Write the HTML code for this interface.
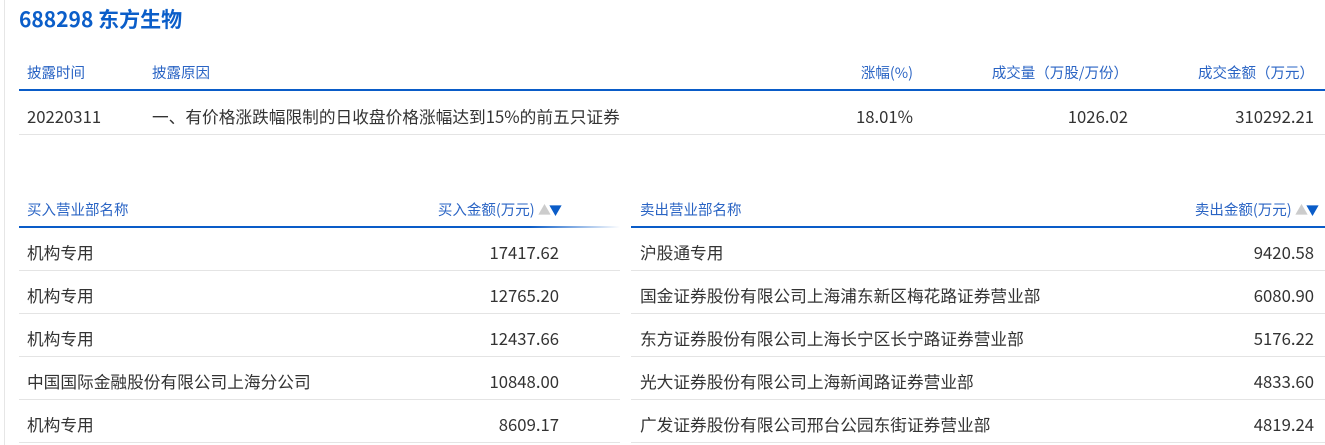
<!DOCTYPE html><html><head><meta charset="utf-8"><style>
body{margin:0;width:1325px;height:445px;overflow:hidden;background:#fff;font-family:"Noto Sans CJK SC","Liberation Sans",sans-serif;font-size:16.7px;color:#333;position:relative}
.bl{position:absolute;left:4px;top:0;width:1px;height:445px;background:#e6e6e6}
.t{position:absolute;left:19px;top:3px;font-size:21px;font-weight:bold;color:#0b5ec9;line-height:32px}
.a{position:absolute;white-space:nowrap;line-height:20px}
.h{color:#2a64c4;font-size:14.5px}
.line{position:absolute;height:2px;background:#0a5cc8}
.sep{position:absolute;height:1px;background:#e4e4e4}
.r{text-align:right}
.tri{font-size:13px;color:#ccc;letter-spacing:-2px}.tri b{color:#0a5cc8;font-weight:normal}
</style></head><body>
<div class="bl"></div>
<div class="t">688298 东方生物</div>
<div class="a h" style="left:27px;top:63px">披露时间</div>
<div class="a h" style="left:152px;top:63px">披露原因</div>
<div class="a h r" style="right:412px;top:63px">涨幅(%)</div>
<div class="a h r" style="right:197px;top:63px">成交量（万股/万份）</div>
<div class="a h r" style="right:11px;top:63px">成交金额（万元）</div>
<div class="line" style="left:19px;width:1306px;top:89px"></div>
<div class="a" style="left:27px;top:106px">20220311</div>
<div class="a" style="left:152px;top:106px">一、有价格涨跌幅限制的日收盘价格涨幅达到15%的前五只证券</div>
<div class="a r" style="right:412px;top:106px">18.01%</div>
<div class="a r" style="right:197px;top:106px">1026.02</div>
<div class="a r" style="right:11px;top:106px">310292.21</div>
<div class="sep" style="left:19px;width:1306px;top:134px"></div>

<div class="a h" style="left:27px;top:200px">买入营业部名称</div>
<div class="a h r" style="right:765px;top:200px">买入金额(万元) <span class="tri">▲<b>▼</b></span></div>
<div class="a h" style="left:640px;top:200px">卖出营业部名称</div>
<div class="a h r" style="right:8px;top:200px">卖出金额(万元) <span class="tri">▲<b>▼</b></span></div>
<div class="line" style="left:19px;width:601px;top:226px;background:linear-gradient(90deg,#0a5cc8 0,#0a5cc8 85%,#fff 100%)"></div>
<div class="line" style="left:631px;width:694px;top:226px"></div>

<div id="rows"></div>
<script>
var L=[["机构专用","17417.62"],["机构专用","12765.20"],["机构专用","12437.66"],["中国国际金融股份有限公司上海分公司","10848.00"],["机构专用","8609.17"]];
var R=[["沪股通专用","9420.58"],["国金证券股份有限公司上海浦东新区梅花路证券营业部","6080.90"],["东方证券股份有限公司上海长宁区长宁路证券营业部","5176.22"],["光大证券股份有限公司上海新闻路证券营业部","4833.60"],["广发证券股份有限公司邢台公园东街证券营业部","4819.24"]];
var h="";for(var i=0;i<5;i++){var y=242+i*43;
h+='<div class="a" style="left:27px;top:'+y+'px">'+L[i][0]+'</div><div class="a r" style="right:766px;top:'+y+'px">'+L[i][1]+'</div>';
h+='<div class="a" style="left:640px;top:'+y+'px">'+R[i][0]+'</div><div class="a r" style="right:11px;top:'+y+'px">'+R[i][1]+'</div>';
h+='<div class="sep" style="left:19px;width:601px;top:'+(y+28)+'px"></div><div class="sep" style="left:631px;width:694px;top:'+(y+28)+'px"></div>';}
document.getElementById("rows").innerHTML=h;
</script>
</body></html>
